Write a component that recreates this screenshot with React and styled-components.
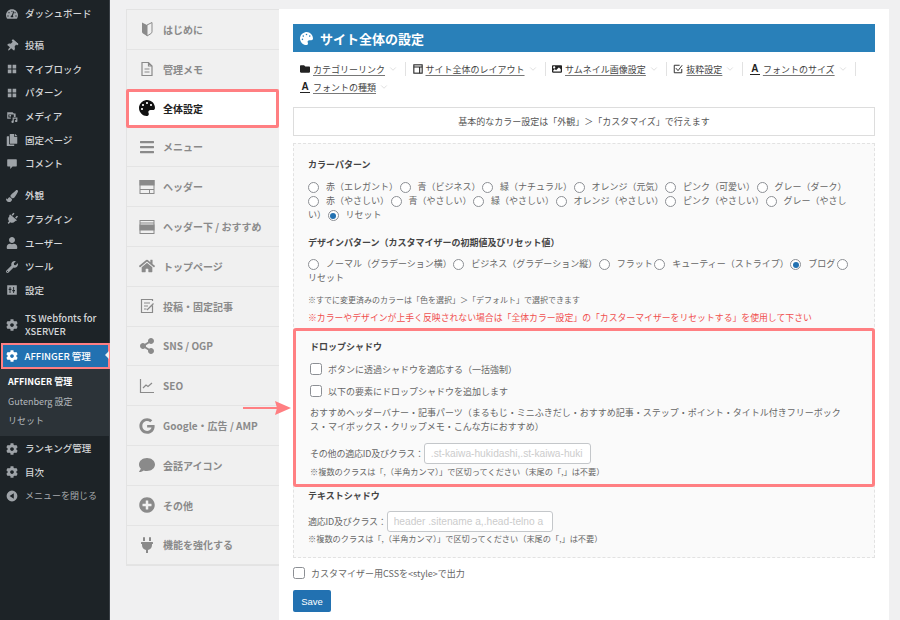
import React from "react"
import styled, { createGlobalStyle } from "styled-components"
import {
  FaTachometerAlt, FaThumbtack, FaCopy, FaPaintBrush, FaPlug, FaUser, FaWrench, FaCog,
  FaPalette, FaBars, FaHome, FaShareAlt, FaGoogle, FaComment, FaPlusCircle,
  FaFolder, FaImage,
} from "react-icons/fa"
import { ChevronDown } from "lucide-react"

const FONT = `"Noto Sans CJK JP", "Liberation Sans", sans-serif`
const PINK = "#ff7f82"

const Global = createGlobalStyle`
  html, body { margin: 0; padding: 0; background: #f0f0f1; overflow: hidden; }
  * { box-sizing: border-box; }
  body { font-family: ${FONT}; }
`

const Page = styled.div`
  position: relative;
  display: flex;
  width: 900px;
  height: 620px;
  overflow: hidden;
  background: #f0f0f1;
`

/* admin sidebar */
const Sidebar = styled.nav`
  flex: 0 0 110px;
  min-width: 0;
  background: #1d2327;
  border-right: 1px solid #3a4046;
  padding-top: 2px;
  color: #d5d7d9;
`
const MenuItem = styled.div`
  display: flex;
  align-items: center;
  gap: 7px;
  min-height: ${(p) => p.$tall || 23.7}px;
  padding-left: 6px;
  margin-top: ${(p) => p.$gap || 0}px;
  font-size: 9.5px;
  line-height: 13px;
  font-weight: 500;
  svg { flex: 0 0 12px; width: 12px; height: 12px; color: #9ea3a8; }
`
const ActiveItem = styled.div`
  display: flex;
  align-items: center;
  gap: 7px;
  position: relative;
  height: 26px;
  margin: 3px -1px 0 1px;
  padding-left: 2.5px;
  background: #2271b1;
  border: 2.5px solid ${PINK};
  color: #fff;
  font-size: 9.5px;
  font-weight: 500;
  svg { width: 12px; height: 12px; }
  &::after {
    content: "";
    position: absolute;
    right: -1px;
    top: 6px;
    border: 4px solid transparent;
    border-right-color: #f0f0f1;
  }
`
const SubMenu = styled.div`
  background: #2c3338;
  padding: 3px 0 5px 8px;
  font-size: 9px;
  color: #b4b9be;
`
const SubItem = styled.div`
  height: 19.5px;
  line-height: 19.5px;
  font-weight: ${(p) => (p.$on ? 700 : 400)};
  color: ${(p) => (p.$on ? "#fff" : "#b4b9be")};
`
const Collapse = styled(MenuItem)`
  color: #a7aaad;
  font-size: 9px;
  font-weight: 400;
`

/* settings tabs */
const Main = styled.div`
  display: flex;
  align-items: flex-start;
  padding: 9px 0 0 16px;
`
const Tabs = styled.div`
  flex: 0 0 153px;
  border: 1px solid #e3e3e3;
  border-right: 0;
  background: #f0f0f0;
`
const Tab = styled.div`
  display: flex;
  align-items: center;
  height: 39.8px;
  padding-left: 12px;
  border-bottom: 1px solid #e4e4e4;
  font-size: 10px;
  font-weight: 700;
  color: #8a8a8a;
  svg { flex: 0 0 16px; width: 16px; height: 16px; color: #8a8a8a; margin-right: 8px; }
`
const ActiveTab = styled(Tab)`
  height: 39px;
  background: #fff;
  color: #222;
  border: 3px solid ${PINK};
  border-radius: 2px;
  margin: -1px 0 0 -1px;
  padding-left: 10px;
  svg { color: #111; }
`

/* main panel */
const Panel = styled.main`
  width: 610px;
  height: 611px;
  background: #fff;
  padding: 15px 14px 0;
`
const Title = styled.h2`
  display: flex;
  align-items: center;
  gap: 7px;
  margin: 0;
  height: 28px;
  padding-left: 7px;
  background: #2980b9;
  color: #fff;
  font-size: 13px;
  font-weight: 700;
  svg { width: 13px; height: 13px; }
`
const AnchorNav = styled.div`
  display: flex;
  flex-wrap: wrap;
  margin-top: 8px;
  min-height: 36px;
`
const Anchor = styled.div`
  display: flex;
  align-items: center;
  height: 14px;
  margin: 2px 0 2px;
  padding: 0 7px 0 ${(p) => (p.$first ? 7 : 6.5)}px;
  border-right: ${(p) => (p.$last ? 0 : "1px solid #e2e2e2")};
  font-size: 9px;
  color: #444;
  svg.lead { width: 10px; height: 10px; color: #222; margin-right: 3px; }
  u { text-underline-offset: 1.5px; text-decoration-color: #777; }
  svg.chev { width: 10px; height: 10px; color: #ccc; margin-left: 3px; }
`
const BigA = styled.span`
  width: 10px;
  margin-right: 3px;
  font: 700 10px/11px "Liberation Sans", sans-serif;
  color: #222;
  text-align: center;
  border-bottom: 1px solid #222;
`
const Notice = styled.div`
  height: 29px;
  margin-top: 11px;
  border: 1px solid #ddd;
  text-align: center;
  font-size: 9px;
  line-height: 27px;
  color: #555;
`
const Settings = styled.section`
  margin-top: 7px;
  padding: 0 14px;
  height: 415px;
  background: #fafafa;
  border: 1px dashed #e2e2e2;
  font-size: 9px;
  color: #666;
`
const Heading = styled.h3`
  margin: ${(p) => p.$top}px 0 0;
  font-size: 9px;
  line-height: 14px;
  font-weight: 700;
  color: #444;
`
const Radios = styled.div`
  margin-top: ${(p) => p.$top}px;
  line-height: 14px;
`
const Choice = styled.span`
  margin-right: 1.5px;
`
const Radio = styled.i`
  display: inline-block;
  vertical-align: -3px;
  width: 11px;
  height: 11px;
  margin-right: 7px;
  border-radius: 50%;
  border: 1px solid #8c8f94;
  background: #fff;
  position: relative;
  &::after {
    content: "";
    display: ${(p) => (p.$on ? "block" : "none")};
    position: absolute;
    inset: 1.5px;
    border-radius: 50%;
    background: #2271b1;
  }
`
const Note = styled.p`
  margin: ${(p) => p.$top}px 0 0;
  line-height: 14px;
  color: ${(p) => (p.$red ? "#f04f4f" : "#666")};
  font-size: ${(p) => p.$size || 9}px;
`
const DropBox = styled.div`
  margin: 3px -15px 0;
  height: 159px;
  padding: 9px 14px 0;
  background: #fafafa;
  border: 3px solid ${PINK};
  border-radius: 3px;
`
const CheckRow = styled.label`
  display: flex;
  align-items: center;
  gap: 6px;
  height: 14px;
  margin-top: ${(p) => p.$top}px;
`
const Box = styled.i`
  flex: 0 0 12px;
  width: 12px;
  height: 12px;
  border: 1px solid #8c8f94;
  border-radius: 2.5px;
  background: #fff;
`
const FieldRow = styled.div`
  display: flex;
  align-items: center;
  letter-spacing: -0.2px;
  margin-top: ${(p) => p.$top}px;
`
const Field = styled.input`
  width: ${(p) => p.$w}px;
  height: 21px;
  padding: 0 6px;
  border: 1px solid #c4c7ca;
  border-radius: 3px;
  background: #fff;
  font: 10.2px "Liberation Sans", sans-serif;
  &::placeholder { color: #ccc; }
`
const Footer = styled.div`
  font-size: 9px;
  color: #666;
`
const Save = styled.button`
  display: block;
  width: 38px;
  height: 22px;
  margin-top: 10px;
  padding: 0;
  border: 0;
  border-radius: 2px;
  background: #2271b1;
  color: #fff;
  font: 9.5px "Liberation Sans", sans-serif;
`
const Arrow = styled.svg`
  position: absolute;
  left: 243px;
  top: 400px;
  width: 50px;
  height: 16px;
`

const GridIcon = () => (
  <svg viewBox="0 0 20 20" fill="currentColor">
    <path d="M3 3h6v6H3zM11 3h6v6h-6zM3 11h6v6H3zM11 11h6v6h-6z" />
  </svg>
)
const MediaIcon = () => (
  <svg viewBox="0 0 20 20" fill="currentColor">
    <path d="M2 2h9l2 2h3v6h-3V6H4v5h4v2H2z" />
    <circle cx="7" cy="8" r="1.6" />
    <path d="M11 11h8v5.5a2 2 0 1 1-2-2V13h-4v5a2 2 0 1 1-2-2z" />
  </svg>
)
const PinIcon = () => <FaThumbtack style={{ transform: "rotate(40deg)" }} />
const AdminPlugIcon = () => <FaPlug style={{ transform: "rotate(40deg)" }} />
const BubbleIcon = () => (
  <svg viewBox="0 0 20 20" fill="currentColor">
    <path d="M3 2h14a1 1 0 0 1 1 1v10a1 1 0 0 1-1 1h-6l-4 4.500V14H3a1 1 0 0 1-1-1V3a1 1 0 0 1 1-1z" />
  </svg>
)
const SettingsIcon = () => (
  <svg viewBox="0 0 20 20" fill="currentColor">
    <path fillRule="evenodd" d="M2 2h16v16H2zM6 5v3H4.500v2H6v5h1.500v-5H9V8H7.500V5zm6 0v5h-1.500v2H12v3h1.500v-3H15v-2h-1.500V5z" />
  </svg>
)
const CollapseIcon = () => (
  <svg viewBox="0 0 20 20" fill="currentColor">
    <path fillRule="evenodd" d="M10 1a9 9 0 1 1 0 18 9 9 0 0 1 0-18zM13 5.500L6 10l7 4.500z" />
  </svg>
)
const BeginnerIcon = () => (
  <svg viewBox="0 0 16 16">
    <path d="M3 1.500l5 2.500v11l-4-2.500a2 2 0 0 1-1-1.700z" fill="currentColor" />
    <path d="M13 1.500L8 4v11l4-2.500a2 2 0 0 0 1-1.700z" fill="none" stroke="currentColor" />
  </svg>
)
const MemoIcon = () => (
  <svg viewBox="0 0 16 16" fill="none" stroke="currentColor" strokeWidth="1.200">
    <path d="M3 1.500h6.500L13 5v9.500H3zM9.500 1.500V5H13M5.500 8h5M5.500 11h5" />
  </svg>
)
const HeaderIcon = () => (
  <svg viewBox="0 0 16 16" fill="none" stroke="currentColor">
    <rect x="1" y="1.500" width="14" height="13" />
    <rect x="1" y="1.500" width="14" height="4.500" fill="currentColor" />
    <path d="M1 10.500h14M10.500 10.500v4" />
  </svg>
)
const HeaderUnderIcon = () => (
  <svg viewBox="0 0 16 16" fill="none" stroke="currentColor">
    <rect x="1" y="1.500" width="14" height="13" />
    <path d="M1 4h14" />
    <rect x="1" y="6" width="14" height="5" fill="currentColor" />
  </svg>
)
const PostIcon = () => (
  <svg viewBox="0 0 16 16" fill="none" stroke="currentColor" strokeWidth="1.200">
    <path d="M13.500 7.500v7h-11v-13h11v1.500M5 5h6M5 8h4M5 11h2.500M8 12l6.500-6.500" />
  </svg>
)
const ChartIcon = () => (
  <svg viewBox="0 0 16 16" fill="none" stroke="currentColor" strokeWidth="1.200">
    <path d="M1.500 1v13.500H15M4 10l3-3 2 1.500L13 5" />
  </svg>
)
const LayoutIcon = () => (
  <svg className="lead" viewBox="0 0 12 12" fill="none" stroke="currentColor" strokeWidth="1.300">
    <rect x="1" y="1" width="10" height="10" />
    <path d="M1 3.500h10M8 3.500V11" />
  </svg>
)
const EditIcon = () => (
  <svg className="lead" viewBox="0 0 12 12" fill="none" stroke="currentColor" strokeWidth="1.100">
    <path d="M10.500 6v4.500h-9v-9H8M3.500 5l2.500 3 5-6.500" />
  </svg>
)

const menuA = [
  [FaTachometerAlt, "ダッシュボード", 0],
  [PinIcon, "投稿", 8],
  [GridIcon, "マイブロック", 0],
  [GridIcon, "パターン", 0],
  [MediaIcon, "メディア", 0],
  [FaCopy, "固定ページ", 0],
  [BubbleIcon, "コメント", 0],
  [FaPaintBrush, "外観", 8],
  [AdminPlugIcon, "プラグイン", 0],
  [FaUser, "ユーザー", 0],
  [FaWrench, "ツール", 0],
  [SettingsIcon, "設定", 0],
]

const tabsTop = [
  [BeginnerIcon, "はじめに"],
  [MemoIcon, "管理メモ"],
]
const tabsBottom = [
  [FaBars, "メニュー"],
  [HeaderIcon, "ヘッダー"],
  [HeaderUnderIcon, "ヘッダー下 / おすすめ"],
  [FaHome, "トップページ"],
  [PostIcon, "投稿・固定記事"],
  [FaShareAlt, "SNS / OGP"],
  [ChartIcon, "SEO"],
  [FaGoogle, "Google・広告 / AMP"],
  [FaComment, "会話アイコン"],
  [FaPlusCircle, "その他"],
  [FaPlug, "機能を強化する"],
]

const colors = [
  ["赤（エレガント）"], ["青（ビジネス）"], ["緑（ナチュラル）"], ["オレンジ（元気）"], ["ピンク（可愛い）"], ["グレー（ダーク）"],
  ["赤（やさしい）"], ["青（やさしい）"], ["緑（やさしい）"], ["オレンジ（やさしい）"], ["ピンク（やさしい）"], ["グレー（やさしい）"], ["リセット", true],
]
const designs = [
  ["ノーマル（グラデーション横）"], ["ビジネス（グラデーション縦）"], ["フラット"], ["キューティー（ストライプ）"], ["ブログ", true], ["リセット"],
]

const TabRow = ({ icon: Icon, label }) => (
  <Tab>
    <Icon />
    {label}
  </Tab>
)

const RadioGroup = ({ items, top }) => (
  <Radios $top={top}>
    {items.map(([label, on]) => (
      <Choice key={label}>
        <Radio $on={on} />
        {label}
      </Choice>
    ))}
  </Radios>
)

const NavLink = ({ lead, label, first, last }) => (
  <Anchor $first={first} $last={last}>
    {lead}
    <u>{label}</u>
    <ChevronDown className="chev" strokeWidth={1.5} />
  </Anchor>
)

export default function App() {
  return (
    <Page>
      <Global />
      <Sidebar>
        {menuA.map(([Icon, label, gap]) => (
          <MenuItem key={label} $gap={gap}>
            <Icon />
            {label}
          </MenuItem>
        ))}
        <MenuItem $gap={8} $tall={30}>
          <FaCog />
          TS Webfonts for XSERVER
        </MenuItem>
        <ActiveItem>
          <FaCog />
          AFFINGER 管理
        </ActiveItem>
        <SubMenu>
          <SubItem $on>AFFINGER 管理</SubItem>
          <SubItem>Gutenberg 設定</SubItem>
          <SubItem>リセット</SubItem>
        </SubMenu>
        <MenuItem $gap={1}>
          <FaCog />
          ランキング管理
        </MenuItem>
        <MenuItem>
          <FaCog />
          目次
        </MenuItem>
        <Collapse>
          <CollapseIcon />
          メニューを閉じる
        </Collapse>
      </Sidebar>

      <Main>
        <Tabs>
          {tabsTop.map(([icon, label]) => (
            <TabRow key={label} icon={icon} label={label} />
          ))}
          <ActiveTab>
            <FaPalette />
            全体設定
          </ActiveTab>
          {tabsBottom.map(([icon, label]) => (
            <TabRow key={label} icon={icon} label={label} />
          ))}
        </Tabs>

        <Panel>
          <Title>
            <FaPalette />
            サイト全体の設定
          </Title>
          <AnchorNav>
            <NavLink first lead={<FaFolder className="lead" />} label="カテゴリーリンク" />
            <NavLink lead={<LayoutIcon />} label="サイト全体のレイアウト" />
            <NavLink lead={<FaImage className="lead" />} label="サムネイル画像設定" />
            <NavLink lead={<EditIcon />} label="抜粋設定" />
            <NavLink lead={<BigA>A</BigA>} label="フォントのサイズ" />
            <NavLink first last lead={<BigA>A</BigA>} label="フォントの種類" />
          </AnchorNav>
          <Notice>基本的なカラー設定は「外観」＞「カスタマイズ」で行えます</Notice>

          <Settings>
            <Heading $top={14}>カラーパターン</Heading>
            <RadioGroup items={colors} top={8} />
            <Heading $top={14}>デザインパターン（カスタマイザーの初期値及びリセット値）</Heading>
            <RadioGroup items={designs} top={7} />
            <Note $top={8} $size={8}>※すでに変更済みのカラーは「色を選択」＞「デフォルト」で選択できます</Note>
            <Note $top={4} $size={8.85} $red>※カラーやデザインが上手く反映されない場合は「全体カラー設定」の「カスターマイザーをリセットする」を使用して下さい</Note>

            <DropBox>
              <Heading $top={0}>ドロップシャドウ</Heading>
              <CheckRow $top={8}>
                <Box />
                ボタンに透過シャドウを適応する（一括強制）
              </CheckRow>
              <CheckRow $top={8}>
                <Box />
                以下の要素にドロップシャドウを追加します
              </CheckRow>
              <Note $top={8}>おすすめヘッダーバナー・記事パーツ（まるもじ・ミニふきだし・おすすめ記事・ステップ・ポイント・タイトル付きフリーボックス・マイボックス・クリップメモ・こんな方におすすめ）</Note>
              <FieldRow $top={9}>
                その他の適応ID及びクラス：
                <Field $w={167} placeholder=".st-kaiwa-hukidashi,.st-kaiwa-huki" readOnly />
              </FieldRow>
              <Note $top={0} $size={8.2}>※複数のクラスは「,（半角カンマ）」で区切ってください（末尾の「,」は不要）</Note>
            </DropBox>

            <Heading $top={2}>テキストシャドウ</Heading>
            <FieldRow $top={8}>
              適応ID及びクラス：
              <Field $w={166} placeholder="header .sitename a,.head-telno a" readOnly />
            </FieldRow>
            <Note $top={-1} $size={8.2}>※複数のクラスは「,（半角カンマ）」で区切ってください（末尾の「,」は不要）</Note>
          </Settings>

          <Footer>
            <CheckRow $top={8}>
              <Box />
              {"カスタマイザー用CSSを<style>で出力"}
            </CheckRow>
            <Save>Save</Save>
          </Footer>
        </Panel>
      </Main>

      <Arrow viewBox="0 0 50 16">
        <path d="M0 7h34v2H0z" fill={PINK} />
        <path d="M32 1l16 7-16 7 2-7z" fill={PINK} />
      </Arrow>
    </Page>
  )
}
